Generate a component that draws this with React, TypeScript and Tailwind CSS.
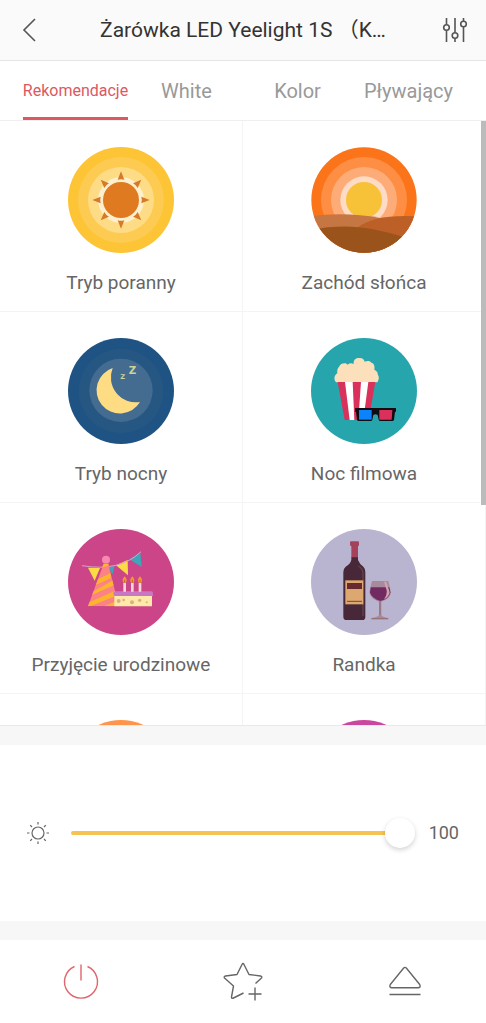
import { useState, type CSSProperties, type ReactNode } from "react";

const tabs = ["Rekomendacje", "White", "Kolor", "Pływający"];

function Morning() {
  return (
    <svg viewBox="24 21 318 318" className="size-[106px]" aria-hidden="true">
      <circle cx="183" cy="180" r="159" fill="#fdc435" />
      <circle cx="183" cy="180" r="129" fill="#fdcb51" />
      <circle cx="183" cy="180" r="99" fill="#fedb85" />
      <circle cx="183" cy="180" r="69" fill="#fef0cd" />
      <circle cx="183" cy="180" r="54" fill="#df7a20" />
      {[0, 45, 90, 135, 180, 225, 270, 315].map((angle) => (
        <path key={angle} d="M183 94l10 25q-10-3-20 0z" fill="#d67a2a" transform={`rotate(${angle} 183 180)`} />
      ))}
    </svg>
  );
}

function Sunset() {
  return (
    <svg viewBox="24 21 318 318" className="size-[106px]" aria-hidden="true">
      <clipPath id="sunset">
        <circle cx="183" cy="180" r="158" />
      </clipPath>
      <g clipPath="url(#sunset)">
        <path d="M24 21h318v318H24z" fill="#fb7419" />
        <circle cx="183" cy="180" r="129" fill="#fe8e43" />
        <circle cx="183" cy="180" r="99" fill="#fdac78" />
        <circle cx="183" cy="180" r="71" fill="#fedbc5" />
        <circle cx="183" cy="180" r="54" fill="#f7c138" />
        <path d="M24 228Q130 215 232 234L342 270V340H24z" fill="#c67643" />
        <path d="M165 262Q215 222 342 229V340H165z" fill="#bd6027" />
        <path d="M24 270Q80 258 145 260Q225 263 342 304V340H24z" fill="#9a541b" />
      </g>
    </svg>
  );
}

function Night() {
  return (
    <svg viewBox="24 24 318 318" className="size-[106px]" aria-hidden="true">
      <circle cx="183" cy="183" r="159" fill="#1e5383" />
      <circle cx="183" cy="183" r="127" fill="#265783" />
      <circle cx="183" cy="181" r="95" fill="#446b90" />
      <path d="M158 114A70 70 0 1 0 240 216A75 75 0 0 1 158 114z" fill="#fedc83" />
      <g fill="#cfd09a" className="font-['DejaVu_Sans',sans-serif] font-bold">
        <text x="206" y="131" fontSize="31">Z</text>
        <text x="181" y="147" fontSize="20">Z</text>
      </g>
    </svg>
  );
}

function Movie() {
  return (
    <svg viewBox="24 24 318 318" className="size-[106px]" aria-hidden="true">
      <circle cx="183" cy="183" r="159" fill="#27a5ad" />
      <path
        d="M99 157C91 147 94 135 103 130C101 119 106 113 109 109C114 98 128 98 134 104Q142 97 152 102C151 86 162 83 170 84C180 84 184 90 185 95C194 92 202 93 205 98C213 99 216 109 214 119C221 123 225 127 224 133C230 143 227 151 223 157z"
        fill="#fcdfbb"
      />
      <path d="M104 156H217L197 270H125z" fill="#d9315b" />
      <path d="M126 156H149L154 270H140zM174 156H196L181 270H166z" fill="#fff" />
      <path d="M156 234H279V245H276L273 269Q272 273 268 273H232Q228 273 227 269L224 255Q217 251 211 255L208 269Q207 273 203 273H168Q163 273 162 269L159 245H156z" fill="#100d12" />
      <path d="M168 240H206V269H168z" fill="#0b83fb" />
      <path d="M229 240H268L266 269H229z" fill="#d9315b" />
    </svg>
  );
}

function Birthday() {
  return (
    <svg viewBox="24 26 318 318" className="size-[106px]" aria-hidden="true">
      <circle cx="183" cy="185" r="159" fill="#cc4589" />
      <path d="M84 142L120 143L104 181z" fill="#fbdc45" />
      <path d="M146 139L164 137L157 163z" fill="#3fa5b8" />
      <path d="M168 135L203 119L204 165z" fill="#fbdc45" />
      <path d="M208 117L241 96L245 140z" fill="#3fa5b8" />
      <path d="M66 136Q180 155 243 94" fill="none" stroke="#d9a0c8" strokeWidth="3" />
      <clipPath id="party-hat">
        <path d="M131 130H145L176 258H84z" />
      </clipPath>
      <g clipPath="url(#party-hat)">
        <path d="M80 125H180V260H80z" fill="#fb8285" />
        <path
          d="M125 128H150V134L125 142zM110 178L152 158V174L105 195zM98 214L165 177V193L90 226zM80 249L176 207V223L80 262zM126 260L180 238V252L155 262z"
          fill="#fdb52c"
        />
      </g>
      <circle cx="138" cy="118" r="12" fill="#f788b0" />
      <path d="M163 226H276V258H163z" fill="#fdeaa8" />
      <path d="M160 219Q160 213 166 213H274Q279 213 279 219V227H162z" fill="#c877c5" />
      <path d="M190 187H198V214H190zM213 187H221V214H213zM236 187H244V214H236z" fill="#f5d9d5" />
      <path
        d="M194 168C203 177 201 187 194 188C187 187 185 177 194 168zM217 168C226 177 224 187 217 188C210 187 208 177 217 168zM240 168C249 177 247 187 240 188C233 187 231 177 240 168z"
        fill="#f39a2c"
      />
      <path d="M194 178V187M217 178V187M240 178V187" stroke="#ae5527" strokeWidth="2" />
      <g fill="#dfb07c">
        <circle cx="176" cy="242" r="6" />
        <circle cx="191" cy="239" r="4" />
        <circle cx="216" cy="246" r="6" />
        <circle cx="239" cy="240" r="5" />
        <circle cx="260" cy="246" r="3" />
      </g>
    </svg>
  );
}

function DateNight() {
  return (
    <svg viewBox="24 26 318 318" className="size-[106px]" aria-hidden="true">
      <circle cx="183" cy="185" r="159" fill="#b9b4cf" />
      <path d="M145 110H165V119Q170 132 181 139Q187 145 187 155V289Q187 299 178 299H131Q121 299 121 289V155Q121 145 128 139Q142 131 145 119z" fill="#482738" />
      <path d="M166 137Q180 145 180 159V287" fill="none" stroke="#62434e" strokeWidth="4" />
      <path d="M144 63H165Q168 63 168 67V73Q168 77 165 78V111H145V78Q141 77 141 73V67Q141 63 144 63z" fill="#a6415c" />
      <path d="M127 180H181V252H127z" fill="#dda86f" />
      <path d="M132 188H177V206H132z" fill="#672a31" />
      <path d="M132 243H177" stroke="#774839" strokeWidth="3" />
      <path d="M207 182H256L264 216Q263 235 235 244V284Q237 290 256 293V297H205V293Q226 290 228 284V244Q201 235 199 216z" fill="#a98a9d" />
      <path d="M203 201H259L262 216Q258 237 232 242Q205 234 201 216z" fill="#712b62" />
      <path d="M243 184H250L260 216Q258 230 243 237Q253 222 251 210z" fill="#d0a3b1" />
      <path d="M231 243V285M206 295H255" stroke="#967379" strokeWidth="4" />
    </svg>
  );
}

function Disc({ color }: { color: string }) {
  return (
    <svg viewBox="0 0 106 106" className="size-[106px]" aria-hidden="true">
      <circle cx="53" cy="53" r="53" fill={color} />
    </svg>
  );
}

const scenes: { label: string; icon: ReactNode }[] = [
  { label: "Tryb poranny", icon: <Morning /> },
  { label: "Zachód słońca", icon: <Sunset /> },
  { label: "Tryb nocny", icon: <Night /> },
  { label: "Noc filmowa", icon: <Movie /> },
  { label: "Przyjęcie urodzinowe", icon: <Birthday /> },
  { label: "Randka", icon: <DateNight /> },
  { label: "", icon: <Disc color="#ff944b" /> },
  { label: "", icon: <Disc color="#ca479d" /> },
];

export default function App() {
  const [tab, setTab] = useState(tabs[0]);
  const [level, setLevel] = useState(100);

  return (
    <div className="flex h-screen flex-col bg-white font-[Roboto,'Noto_Sans_CJK_SC',sans-serif] text-[#666]">
      <header className="flex h-[61px] shrink-0 items-center justify-between border-b border-[#e5e5e5] bg-[#fafafa] px-4">
        <button type="button" aria-label="Wstecz" className="flex size-7 items-center justify-center">
          <svg viewBox="0 0 28 28" className="size-7" fill="none" stroke="#555" strokeWidth="1.6">
            <path d="M19 3L8 14L19 25" />
          </svg>
        </button>
        <h1 className="pt-0.5 text-[21px] whitespace-nowrap text-[#333]">Żarówka LED Yeelight 1S （K…</h1>
        <button type="button" aria-label="Ustawienia" className="flex size-7 items-center justify-center">
          <svg viewBox="0 0 28 28" className="size-7" fill="none" stroke="#555" strokeWidth="1.6">
            <path d="M4.500 2V8.500M4.500 14.500V26M13 2V16.500M13 22.500V26M21.500 2V5M21.500 11V26" />
            <circle cx="4.500" cy="11.500" r="2.800" />
            <circle cx="13" cy="19.500" r="2.800" />
            <circle cx="21.500" cy="8" r="2.800" />
          </svg>
        </button>
      </header>

      <nav className="grid h-[60px] shrink-0 grid-cols-4 justify-items-center border-b border-[#efefef] pr-[22px] pl-5">
        {tabs.map((name) => (
          <button
            key={name}
            type="button"
            onClick={() => setTab(name)}
            className={
              name === tab
                ? "border-b-3 border-[#dd5860] pt-1 text-base text-[#dd5860]"
                : "border-b-3 border-transparent pt-1 text-xl text-[#999]"
            }
          >
            {name}
          </button>
        ))}
      </nav>

      <main className="relative min-h-0 flex-1 border-b border-[#e9e9e9]">
        <div className="grid h-full grid-cols-2 content-start overflow-y-auto [scrollbar-width:none]">
          {scenes.map((scene, i) => (
            <button
              key={i}
              type="button"
              className="flex h-[191px] flex-col items-center gap-4 border-r border-b border-[#f4f4f4] pt-[26px]"
            >
              {scene.icon}
              <span className="text-[19px] leading-7">{scene.label}</span>
            </button>
          ))}
        </div>
        <div className="absolute top-0 right-0 h-7/11 w-[5px] bg-[#bbb]" />
      </main>

      <section className="shrink-0 border-y-[19px] border-[#f7f7f7]">
        <div className="flex h-44 items-center pr-[27px] pl-[26px]">
          <svg viewBox="0 0 24 24" className="mr-[21px] size-6 shrink-0" fill="none" stroke="#666" strokeWidth="1.2" aria-hidden="true">
            <circle cx="12" cy="12" r="6" />
            <path d="M12 1V3.500M12 20.500V23M1 12H3.500M20.500 12H23M4.200 4.200L6 6M18 18L19.800 19.800M19.800 4.200L18 6M6 18L4.200 19.800" />
          </svg>
          <input
            type="range"
            aria-label="Jasność"
            min={1}
            max={100}
            value={level}
            onChange={(e) => setLevel(Number(e.target.value))}
            style={{ "--level": `${level}%` } as CSSProperties}
            className="h-[30px] min-w-0 flex-1 appearance-none bg-transparent [&::-webkit-slider-runnable-track]:h-1 [&::-webkit-slider-runnable-track]:rounded-full [&::-webkit-slider-runnable-track]:bg-[linear-gradient(to_right,#f6c251_var(--level),#e5e5e5_var(--level))] [&::-webkit-slider-thumb]:-mt-[13px] [&::-webkit-slider-thumb]:size-[30px] [&::-webkit-slider-thumb]:appearance-none [&::-webkit-slider-thumb]:rounded-full [&::-webkit-slider-thumb]:bg-white [&::-webkit-slider-thumb]:shadow-[0_2px_5px_rgba(0,0,0,0.18)]"
          />
          <output className="ml-[14px] text-lg">{level}</output>
        </div>
      </section>

      <footer className="grid h-[83px] shrink-0 grid-cols-3">
        <button type="button" aria-label="Zasilanie" className="flex items-center justify-center">
          <svg viewBox="0 0 40 40" className="size-10" fill="none" stroke="#e0666d" strokeWidth="1.4">
            <path d="M13.500 4.500A16.500 16.500 0 1 0 26.500 4.500M20 2.500V18.500" />
          </svg>
        </button>
        <button type="button" aria-label="Dodaj do ulubionych" className="flex items-center justify-center">
          <svg viewBox="0 0 40 40" className="size-10" fill="none" stroke="#666" strokeWidth="1.4" strokeLinejoin="round">
            <path d="M20.500 31L10.500 36Q8.500 37 8.500 35L10.500 24L1.500 16Q0.500 14.500 2.500 14L14 12.500L19 2.500Q20 0.500 21 2.500L26 12.500L37.500 14Q39.500 14.500 38.500 16L32.500 21.500M32 25.500V38.500M25.500 32H38.500" />
          </svg>
        </button>
        <button type="button" aria-label="Rozwiń" className="flex items-center justify-center">
          <svg viewBox="0 0 40 40" className="size-10" fill="none" stroke="#666" strokeWidth="1.4" strokeLinejoin="round">
            <path d="M18.500 6.300Q20 4.500 21.500 6.300L34.700 22.500Q36.200 25.700 33 25.700H7Q3.800 25.700 5.300 22.500zM4.500 32.500H35.500" />
          </svg>
        </button>
      </footer>
    </div>
  );
}
